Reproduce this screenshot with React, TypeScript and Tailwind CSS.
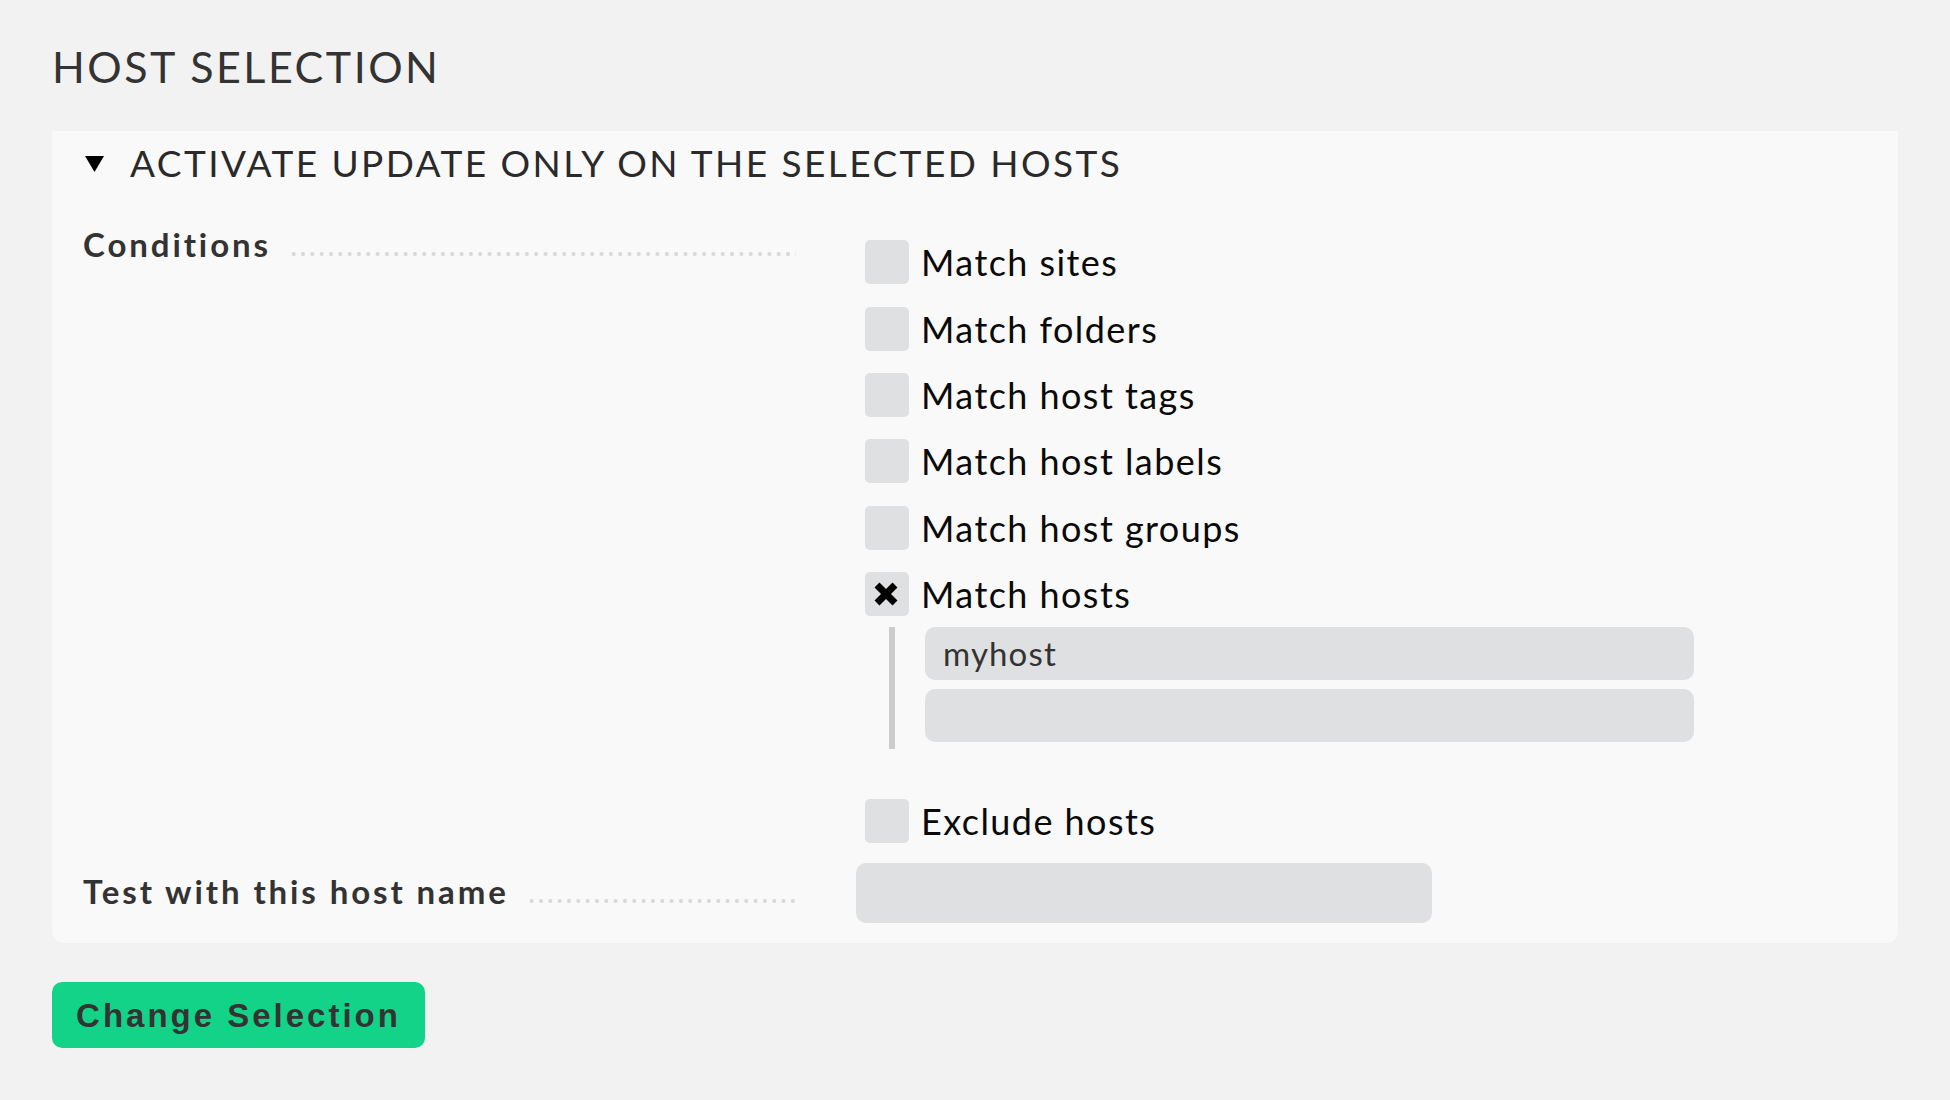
import React from 'react';

const conditions = [
  { label: 'Match sites', checked: false },
  { label: 'Match folders', checked: false },
  { label: 'Match host tags', checked: false },
  { label: 'Match host labels', checked: false },
  { label: 'Match host groups', checked: false },
  { label: 'Match hosts', checked: true },
];

function Checkbox({ checked }: { checked?: boolean }) {
  return (
    <span className="flex h-[44px] w-[44px] shrink-0 items-center justify-center rounded-[5px] bg-[#dfe0e2]">
      {checked && (
        <svg width="26" height="26" viewBox="0 0 26 26" className="-ml-[3px]">
          <path d="M4 4 L22 22 M22 4 L4 22" stroke="#000" strokeWidth="7" />
        </svg>
      )}
    </span>
  );
}

function CheckRow({ label, checked }: { label: string; checked?: boolean }) {
  return (
    <label className="flex h-[66.4px] items-center gap-[12px] text-[36px] leading-none tracking-[0.04em] text-[#0a0a0a]">
      <Checkbox checked={checked} />
      <span>{label}</span>
    </label>
  );
}

// legend cell: bold label followed by a dotted leader
function Legend({ children }: { children: React.ReactNode }) {
  return (
    <div className="flex w-[773px] shrink-0 items-end">
      <span className="text-[33px] font-bold leading-none tracking-[0.088em] text-[#333]">{children}</span>
      <span className="mb-[3px] ml-[18px] mr-[60px] h-[8px] flex-1 bg-[radial-gradient(circle,#d9d9d9_1.8px,transparent_2.3px)] bg-[length:9.33px_8px] bg-repeat-x" />
    </div>
  );
}

export default function App() {
  return (
    <div className="min-h-screen bg-[#f2f2f2] px-[52px] pt-[45px] font-['Lato',sans-serif]">
      <h3 className="text-[43px] font-normal uppercase leading-none tracking-[0.058em] text-[#333]">
        Host selection
      </h3>

      <div className="mt-[43px] rounded-b-[12px] bg-[#f9f9f9] pb-[20px] pl-[31px] pt-[13px]">
        {/* fold header */}
        <div className="flex items-center">
          <svg width="19" height="16" viewBox="0 0 19 16" className="ml-[2px] mt-[2px]">
            <polygon points="0,0 19,0 9.5,16" fill="#000" />
          </svg>
          <span className="ml-[26px] text-[37px] uppercase leading-none tracking-[0.066em] text-[#2a2a2a]">
            Activate update only on the selected hosts
          </span>
        </div>

        {/* conditions */}
        <div className="mt-[47px] flex items-start">
          <Legend>Conditions</Legend>
          <div className="mt-[1px] flex flex-col pl-[9px]">
            {conditions.map((c) => (
              <CheckRow key={c.label} label={c.label} checked={c.checked} />
            ))}
            <div className="mb-[38.5px] ml-[24px] flex flex-col gap-[9px] border-l-[6px] border-[#cccccc] pb-[7px] pl-[30px]">
              <div className="flex h-[53px] w-[769px] items-center rounded-[10px] bg-[#dfe0e2] pl-[18px] text-[33px] leading-none tracking-[0.035em] text-[#333]">
                myhost
              </div>
              <div className="h-[53px] w-[769px] rounded-[10px] bg-[#dfe0e2]" />
            </div>
            <CheckRow label="Exclude hosts" />
          </div>
        </div>

        {/* test host name */}
        <div className="mt-[9px] flex items-start">
          <div className="pt-[12px]">
            <Legend>Test with this host name</Legend>
          </div>
          <div className="h-[60px] w-[576px] rounded-[10px] bg-[#dfe0e2]" />
        </div>
      </div>

      <button className="mt-[39px] flex h-[66px] w-[373px] items-center justify-center rounded-[10px] bg-[#13d389] font-['Liberation_Sans',sans-serif] text-[33px] font-bold leading-none tracking-[3px] text-[#333]">
        Change Selection
      </button>
    </div>
  );
}
